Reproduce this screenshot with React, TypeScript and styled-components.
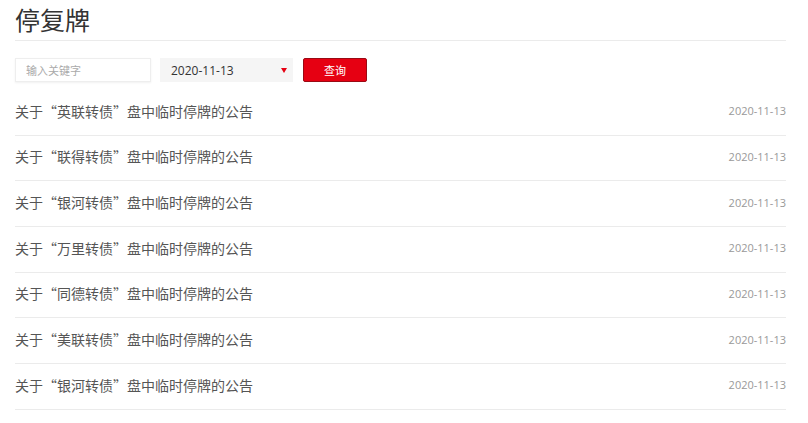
import React, { useState } from 'react';
import styled, { createGlobalStyle } from 'styled-components';

const GlobalStyle = createGlobalStyle`
  html, body {
    margin: 0;
    padding: 0;
    background: #fff;
  }
  body {
    font-family: "Noto Sans", "Noto Sans CJK SC", sans-serif;
    color: #333;
  }
  * {
    box-sizing: border-box;
  }
`;

const Page = styled.div`
  width: 771px;
  margin-left: 15px;
`;

const Title = styled.h1`
  margin: 0;
  height: 41px;
  padding-top: 4px;
  font-family: "Noto Sans CJK SC", sans-serif;
  font-size: 25px;
  font-weight: 400;
  line-height: 30px;
  color: #333;
  border-bottom: 1px solid #ebebeb;
`;

const SearchBar = styled.form`
  display: flex;
  align-items: center;
  height: 49px;
  padding-top: 17px;
  padding-bottom: 8px;
`;

const KeywordInput = styled.input`
  width: 136px;
  height: 24px;
  padding: 0 10px;
  border: 1px solid #eee;
  box-shadow: 0 1px 2px rgba(0, 0, 0, 0.06);
  font-family: "Noto Sans CJK SC", sans-serif;
  font-size: 11px;
  color: #333;
  outline: none;

  &::placeholder {
    color: #aaa;
  }
`;

const DateSelect = styled.div`
  position: relative;
  display: flex;
  align-items: center;
  width: 133px;
  height: 24px;
  margin-left: 9px;
  padding-left: 11px;
  background: #f5f5f5;
  font-family: "Open Sans", "Noto Sans", sans-serif;
  font-size: 12px;
  color: #333;
`;

const Caret = styled.span`
  position: absolute;
  right: 6px;
  top: 10px;
  width: 0;
  height: 0;
  border-left: 3.5px solid transparent;
  border-right: 3.5px solid transparent;
  border-top: 5px solid #e60012;
`;

const QueryButton = styled.button`
  width: 64px;
  height: 24px;
  margin-left: 10px;
  padding: 0;
  background: #e60012;
  border: 1px solid #9a0a14;
  border-radius: 2px;
  font-family: "Noto Sans CJK SC", sans-serif;
  font-size: 11px;
  color: #fff;
  cursor: pointer;
`;

const List = styled.ul`
  list-style: none;
  margin: 0;
  padding: 0;
`;

const Row = styled.li`
  display: flex;
  align-items: center;
  justify-content: space-between;
  height: 45.67px;
  padding-bottom: 3px;
  border-bottom: 1px solid #ebebeb;
`;

const RowTitle = styled.a`
  font-family: "Noto Sans CJK SC", sans-serif;
  font-size: 14px;
  color: #555;
  text-decoration: none;
`;

const RowDate = styled.span`
  font-family: "Open Sans", "Noto Sans", sans-serif;
  font-size: 11px;
  color: #999;
`;

const notices = [
  '英联转债',
  '联得转债',
  '银河转债',
  '万里转债',
  '同德转债',
  '美联转债',
  '银河转债',
  '英联转债',
];

const App: React.FC = () => {
  const [keyword, setKeyword] = useState('');

  return (
    <Page>
      <GlobalStyle />
      <Title>停复牌</Title>
      <SearchBar onSubmit={(e) => e.preventDefault()}>
        <KeywordInput
          value={keyword}
          onChange={(e) => setKeyword(e.target.value)}
          placeholder="输入关键字"
        />
        <DateSelect>
          2020-11-13
          <Caret />
        </DateSelect>
        <QueryButton type="submit">查询</QueryButton>
      </SearchBar>
      <List>
        {notices.map((name, i) => (
          <Row key={i}>
            <RowTitle href="#">关于“{name}”盘中临时停牌的公告</RowTitle>
            <RowDate>2020-11-13</RowDate>
          </Row>
        ))}
      </List>
    </Page>
  );
};

export default App;
